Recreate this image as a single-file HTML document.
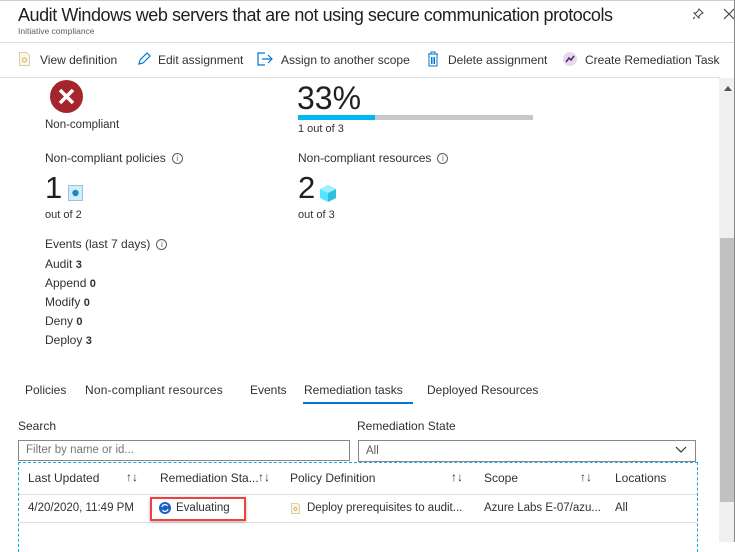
<!DOCTYPE html>
<html><head><meta charset="utf-8"><style>
*{margin:0;padding:0;box-sizing:border-box}
body{width:735px;height:542px;overflow:hidden;background:#fff;font-family:"Liberation Sans",sans-serif;color:#323130;position:relative}
.a{position:absolute;white-space:nowrap}
.t{font-size:12px;color:#323130}
.info{display:inline-block;width:11px;height:11px;border:1px solid #605e5c;border-radius:50%;font-size:8px;line-height:9px;text-align:center;color:#605e5c;vertical-align:1px;margin-left:6px}
.tb{font-size:12px;color:#323130}
.hd{font-size:12px;color:#323130}
</style></head><body>
<div class="a" style="left:0;top:0;width:735px;height:1px;background:#ccc"></div>
<div class="a" style="left:18px;top:5px;font-size:18px;color:#201f1e;letter-spacing:-0.45px">Audit Windows web servers that are not using secure communication protocols</div>
<div class="a" style="left:18px;top:26px;font-size:8.5px;color:#605e5c">Initiative compliance</div>
<svg class="a" style="left:692px;top:8px" width="12" height="12" viewBox="0 0 12 12"><path d="M7 1l4 4-2 1-2 2 0 2-5-5 2 0 2-2z M3 9l-2 2" stroke="#444" fill="none" stroke-width="1"/></svg>
<svg class="a" style="left:723px;top:8px" width="12" height="12"><path d="M1 1l10 10M11 1L1 11" stroke="#444" stroke-width="1.2"/></svg>
<div class="a" style="left:0;top:42px;width:735px;height:1px;background:#ddd"></div>
<svg class="a" style="left:19px;top:52px" width="11" height="14"><path d="M.5 .5h7l3 3v10h-10z" fill="#fdf6e3" stroke="#d8cfa8"/><circle cx="5.5" cy="8" r="2" fill="none" stroke="#c8b874"/></svg>
<div class="a tb" style="left:40px;top:53px">View definition</div>
<svg class="a" style="left:137px;top:52px" width="14" height="14"><path d="M2 12l1-4 7-7 3 3-7 7z" fill="none" stroke="#0078d4" stroke-width="1.2"/></svg>
<div class="a tb" style="left:158px;top:53px">Edit assignment</div>
<svg class="a" style="left:257px;top:52px" width="16" height="14"><path d="M8 1H1v12h7M5 7h10M11 3l4 4-4 4" fill="none" stroke="#0078d4" stroke-width="1.2"/></svg>
<div class="a tb" style="left:281px;top:53px">Assign to another scope</div>
<svg class="a" style="left:427px;top:51px" width="12" height="16"><path d="M1 3h10M4 3V1h4v2M2 3v12h8V3M4.5 6v7M6 6v7M7.5 6v7" fill="none" stroke="#0078d4" stroke-width="1"/></svg>
<div class="a tb" style="left:448px;top:53px">Delete assignment</div>
<svg class="a" style="left:563px;top:52px" width="14" height="14"><circle cx="7" cy="7" r="7" fill="#e6dbea"/><path d="M3 10l3-4 2 2 3-4" fill="none" stroke="#5c2d6e" stroke-width="1.6"/></svg>
<div class="a tb" style="left:585px;top:53px">Create Remediation Task</div>
<div class="a" style="left:0;top:77px;width:720px;height:1px;background:#ddd"></div>
<div class="a" style="left:719px;top:78px;width:15px;height:464px;background:#f0f0f0"></div>
<div class="a" style="left:720px;top:238px;width:14px;height:264px;background:#c1c1c1"></div>
<svg class="a" style="left:724px;top:86px" width="8" height="5"><path d="M0 5L4 0 8 5z" fill="#555"/></svg>
<div class="a" style="left:734px;top:0;width:1px;height:542px;background:#888"></div>
<svg class="a" style="left:49px;top:79px" width="35" height="35"><circle cx="17.5" cy="17.5" r="16.5" fill="#a4262c"/><path d="M11 11l13 13M24 11L11 24" stroke="#fff" stroke-width="3.5"/></svg>
<div class="a t" style="left:45px;top:119px;font-size:11.5px">Non-compliant</div>
<div class="a" style="left:297px;top:80px;font-size:32px;color:#201f1e">33%</div>
<div class="a" style="left:298px;top:115px;width:235px;height:5px;background:#c8c8c8"></div>
<div class="a" style="left:298px;top:115px;width:77px;height:5px;background:#00b7f1"></div>
<div class="a t" style="left:298px;top:123px;font-size:11px">1 out of 3</div>
<div class="a t" style="left:45px;top:151px">Non-compliant policies<span class="info">i</span></div>
<div class="a t" style="left:298px;top:151px">Non-compliant resources<span class="info">i</span></div>
<div class="a" style="left:45px;top:170px;font-size:31px;color:#201f1e">1</div>
<svg class="a" style="left:68px;top:185px" width="15" height="16"><rect x=".5" y=".5" width="14" height="15" fill="#d4ecf7" stroke="#8cc8e6"/><circle cx="7.5" cy="8" r="3.2" fill="#1e88c7"/></svg>
<div class="a" style="left:298px;top:170px;font-size:31px;color:#201f1e">2</div>
<svg class="a" style="left:320px;top:185px" width="16" height="17"><path d="M8 0l8 4v9l-8 4-8-4V4z" fill="#50e6ff"/><path d="M8 8l8-4v9l-8 4z" fill="#32bedd"/><path d="M0 4l8 4 8-4-8-4z" fill="#9cf0ff"/></svg>
<div class="a t" style="left:45px;top:209px;font-size:11px">out of 2</div>
<div class="a t" style="left:298px;top:209px;font-size:11px">out of 3</div>
<div class="a t" style="left:45px;top:237px">Events (last 7 days)<span class="info">i</span></div>
<div class="a t" style="left:45px;top:257px">Audit <b style="font-size:11px">3</b></div>
<div class="a t" style="left:45px;top:276px">Append <b style="font-size:11px">0</b></div>
<div class="a t" style="left:45px;top:295px">Modify <b style="font-size:11px">0</b></div>
<div class="a t" style="left:45px;top:314px">Deny <b style="font-size:11px">0</b></div>
<div class="a t" style="left:45px;top:333px">Deploy <b style="font-size:11px">3</b></div>
<div class="a t" style="left:25px;top:383px">Policies</div>
<div class="a t" style="left:85px;top:383px;letter-spacing:0.2px">Non-compliant resources</div>
<div class="a t" style="left:250px;top:383px">Events</div>
<div class="a t" style="left:304px;top:383px">Remediation tasks</div>
<div class="a" style="left:303px;top:402px;width:110px;height:2px;background:#0078d4"></div>
<div class="a t" style="left:427px;top:383px">Deployed Resources</div>
<div class="a t" style="left:18px;top:419px">Search</div>
<div class="a t" style="left:357px;top:419px">Remediation State</div>
<div class="a" style="left:18px;top:440px;width:332px;height:21px;border:1px solid #8a8886"></div>
<div class="a" style="left:26px;top:444px;font-size:11.5px;color:#767676">Filter by name or id...</div>
<div class="a" style="left:358px;top:440px;width:338px;height:22px;border:1px solid #8a8886"></div>
<div class="a" style="left:366px;top:445px;font-size:11.5px;color:#605e5c">All</div>
<svg class="a" style="left:675px;top:446px" width="12" height="8"><path d="M1 1l5 5 5-5" fill="none" stroke="#333" stroke-width="1.2"/></svg>
<div class="a" style="left:18px;top:462px;width:680px;height:90px;border:1px dashed #1aa4e8;border-bottom:none"></div>
<div class="a" style="left:19px;top:494px;width:678px;height:1px;background:#e1dfdd"></div>
<div class="a" style="left:19px;top:522px;width:678px;height:1px;background:#e1dfdd"></div>
<div class="a hd" style="left:28px;top:471px">Last Updated</div>
<div class="a hd" style="left:126px;top:470px">↑↓</div>
<div class="a hd" style="left:160px;top:471px">Remediation Sta...</div>
<div class="a hd" style="left:258px;top:470px">↑↓</div>
<div class="a hd" style="left:290px;top:471px">Policy Definition</div>
<div class="a hd" style="left:451px;top:470px">↑↓</div>
<div class="a hd" style="left:484px;top:471px">Scope</div>
<div class="a hd" style="left:580px;top:470px">↑↓</div>
<div class="a hd" style="left:615px;top:471px">Locations</div>
<div class="a t" style="left:28px;top:502px;font-size:11.5px">4/20/2020, 11:49 PM</div>
<div class="a" style="left:150px;top:497px;width:96px;height:24px;border:2px solid #f04040;box-shadow:0 1px 3px rgba(0,0,0,.3)"></div>
<svg class="a" style="left:159px;top:502px" width="12" height="12"><circle cx="6" cy="6" r="6" fill="#1a5fc7"/><path d="M3 5a3 3 0 0 1 5.5-1M9 7a3 3 0 0 1-5.5 1" fill="none" stroke="#fff" stroke-width="1.2"/></svg>
<div class="a t" style="left:176px;top:502px;font-size:11.5px">Evaluating</div>
<svg class="a" style="left:291px;top:503px" width="9" height="11"><path d="M.5 .5h6l2 2v8h-8z" fill="#fdf6e3" stroke="#d8cfa8"/><circle cx="4.5" cy="6" r="1.6" fill="none" stroke="#c8b874"/></svg>
<div class="a t" style="left:307px;top:502px;font-size:11.5px">Deploy prerequisites to audit...</div>
<div class="a t" style="left:484px;top:502px;font-size:11.5px">Azure Labs E-07/azu...</div>
<div class="a t" style="left:615px;top:502px;font-size:11.5px">All</div>
</body></html>
